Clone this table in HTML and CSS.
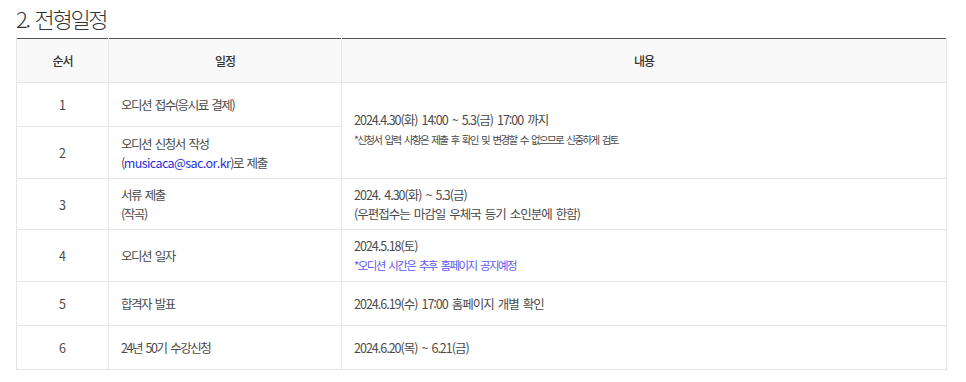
FILE: index.html
```html
<!DOCTYPE html>
<html lang="ko">
<head>
<meta charset="utf-8">
<link rel="stylesheet" href="styles.css">
</head>
<body>
<div class="wrap">
  <h2 class="title">2. 전형일정</h2>
  <table class="sched">
    <colgroup>
      <col class="c1"><col class="c2"><col class="c3">
    </colgroup>
    <thead>
      <tr><th>순서</th><th>일정</th><th>내용</th></tr>
    </thead>
    <tbody>
      <tr>
        <td class="num">1</td>
        <td class="step">오디션 접수(응시료 결제)</td>
        <td class="desc" rowspan="2">2024.4.30(화) 14:00 ~ 5.3(금) 17:00 까지<br><span class="small">*신청서 입력 사항은 제출 후 확인 및 변경할 수 없으므로 신중하게 검토</span></td>
      </tr>
      <tr class="tall">
        <td class="num">2</td>
        <td class="step">오디션 신청서 작성<br>(<span class="link">musicaca@sac.or.kr</span>)로 제출</td>
      </tr>
      <tr class="tall mid">
        <td class="num">3</td>
        <td class="step">서류 제출<br>(작곡)</td>
        <td class="desc">2024. 4.30(화) ~ 5.3(금)<br>(우편접수는 마감일 우체국 등기 소인분에 한함)</td>
      </tr>
      <tr class="tall">
        <td class="num">4</td>
        <td class="step">오디션 일자</td>
        <td class="desc">2024.5.18(토)<br><span class="note">*오디션 시간은 추후 홈페이지 공지예정</span></td>
      </tr>
      <tr>
        <td class="num">5</td>
        <td class="step">합격자 발표</td>
        <td class="desc">2024.6.19(수) 17:00 홈페이지 개별 확인</td>
      </tr>
      <tr>
        <td class="num">6</td>
        <td class="step">24년 50기 수강신청</td>
        <td class="desc">2024.6.20(목) ~ 6.21(금)</td>
      </tr>
    </tbody>
  </table>
</div>
</body>
</html>
```

FILE: styles.css
```css
html, body {
  margin: 0;
  padding: 0;
  background: #fff;
}
body {
  font-family: "Noto Sans CJK KR", "Noto Sans", sans-serif;
  color: #4a4a4a;
}
.wrap {
  padding: 0 20px 0 16px;
}
.title {
  margin: 0;
  padding-top: 3px;
  height: 35px;
  font-size: 22px;
  line-height: 30px;
  font-weight: 300;
  color: #333;
  letter-spacing: -2.3px;
  word-spacing: 2px;
}
.sched {
  width: 930px;
  border-collapse: collapse;
  table-layout: fixed;
  font-size: 12.5px;
  border: 1px solid #e6e6e6;
  border-top: 1px solid #555;
}
.c1 { width: 92px; }
.c2 { width: 233px; }
.c3 { width: 605px; }
.sched th {
  background: #f9f9f9;
  font-weight: 500;
  color: #333;
  height: 43px;
  padding: 0;
  border-left: 1px solid #e6e6e6;
  border-bottom: 1px solid #e6e6e6;
  font-size: 12px;
  letter-spacing: -1px;
}
.sched td {
  height: 44px;
  padding: 5px 12px;
  line-height: 19px;
  border: 1px solid #e6e6e6;
  vertical-align: middle;
  box-sizing: border-box;
}
.sched tr.tall td {
  height: 52px;
}
.sched tr.mid td {
  height: 51px;
}
.sched td.num {
  text-align: center;
  padding: 0;
}
.sched td.step {
  letter-spacing: -1.45px;
  word-spacing: 1.5px;
}
.sched td.desc {
  letter-spacing: -1px;
  word-spacing: 1.5px;
}
.small {
  font-size: 10.5px;
  line-height: 22px;
  letter-spacing: -1.65px;
  word-spacing: 2px;
}
.link {
  color: #1f2fe0;
  letter-spacing: -0.6px;
}
.note {
  color: #5a5af5;
  font-size: 11.5px;
  letter-spacing: -1.6px;
  word-spacing: 2px;
}
```
